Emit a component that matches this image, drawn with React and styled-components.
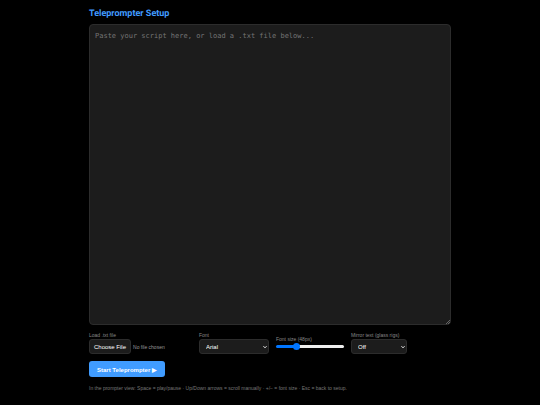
import { useState } from "react";
import styled, { createGlobalStyle } from "styled-components";

const fonts = ["Arial", "Georgia", "Verdana", "Courier New"];

const GlobalStyle = createGlobalStyle`
  * {
    box-sizing: border-box;
  }

  body {
    margin: 0;
    background: #000;
    color: #fff;
    font-family: "Liberation Sans", Arial, sans-serif;
  }
`;

const Setup = styled.main`
  display: flex;
  flex-direction: column;
  align-items: flex-start;
  max-width: 362px;
  height: 100vh;
  margin: 0 auto;
  padding: 8px 0 13px;
`;

const Title = styled.h1`
  margin: 0 0 4px;
  font-family: Roboto, "Liberation Sans", sans-serif;
  font-size: 9px;
  line-height: 12px;
  text-rendering: geometricPrecision;
  color: #409cff;
`;

const Script = styled.textarea`
  display: block;
  flex: 1;
  width: 100%;
  min-height: 80px;
  padding: 5px;
  border: 1px solid #2c2c2c;
  border-radius: 4px;
  background: #1c1c1c;
  color: #fff;
  font-family: "DejaVu Sans Mono", monospace;
  font-size: 7px;
  line-height: 12px;
  resize: vertical;
  outline: none;

  &::placeholder {
    color: #757575;
  }

  &::-webkit-resizer {
    background: linear-gradient(
        135deg,
        transparent 50%,
        #666 50%,
        #666 62%,
        transparent 62%,
        transparent 75%,
        #666 75%,
        #666 87%,
        transparent 87%
      )
      right bottom / 4px 4px no-repeat;
  }
`;

const Controls = styled.div`
  display: flex;
  flex-wrap: wrap;
  align-items: center;
  gap: 7px;
  margin: 7px 0;
`;

const Field = styled.div`
  display: flex;
  flex-direction: column;
  width: ${(props) => props.$width}px;
`;

const Label = styled.label`
  font-size: 5px;
  line-height: 7px;
  color: #888;
`;

const FileInput = styled.input`
  width: 100%;
  height: 15px;
  font-family: inherit;
  font-size: 5px;
  line-height: 15px;
  color: #999;

  &::file-selector-button {
    height: 15px;
    margin: 0 2px 0 0;
    padding: 0 4px;
    border: 1px solid #2c2c2c;
    border-radius: 3px;
    background: #1c1c1c;
    color: #fff;
    font-family: inherit;
    font-size: 6px;
  }
`;

const SelectBox = styled.div`
  position: relative;

  svg {
    position: absolute;
    top: 6px;
    right: 2px;
    width: 4px;
    height: 4px;
    pointer-events: none;
  }
`;

const SelectInput = styled.select`
  display: block;
  appearance: none;
  width: 100%;
  height: 15px;
  padding: 0 6px;
  border: 1px solid #2c2c2c;
  border-radius: 3px;
  background: #1c1c1c;
  color: #fff;
  font-family: inherit;
  font-size: 6px;
`;

const Slider = styled.input`
  display: block;
  appearance: none;
  width: 100%;
  height: 7px;
  margin: 0;
  background: transparent;

  &::-webkit-slider-runnable-track {
    height: 3px;
    border-radius: 2px;
    background: linear-gradient(
      to right,
      #0075ff var(--fill),
      #efefef var(--fill)
    );
  }

  &::-webkit-slider-thumb {
    appearance: none;
    width: 7px;
    height: 7px;
    margin-top: -2px;
    border-radius: 50%;
    background: #0075ff;
  }
`;

const StartButton = styled.button`
  height: 16px;
  padding: 0 8px;
  border: none;
  border-radius: 3px;
  background: #409cff;
  color: #fff;
  font-family: inherit;
  font-size: 6px;
  font-weight: bold;
`;

const Hint = styled.p`
  margin: 8px 0 0;
  font-size: 5px;
  line-height: 7px;
  color: #777;
`;

function Select({ id, value, onChange, options }) {
  return (
    <SelectBox>
      <SelectInput id={id} value={value} onChange={onChange}>
        {options.map((option) => (
          <option key={option}>{option}</option>
        ))}
      </SelectInput>
      <svg viewBox="0 0 8 8" aria-hidden="true">
        <path d="M1 2.5l3 3 3-3" fill="none" stroke="#fff" strokeWidth="2" />
      </svg>
    </SelectBox>
  );
}

function App() {
  const [script, setScript] = useState("");
  const [font, setFont] = useState("Arial");
  const [fontSize, setFontSize] = useState(48);
  const [mirror, setMirror] = useState("Off");

  const loadFile = async (e) => {
    const file = e.target.files[0];
    if (file) {
      setScript(await file.text());
    }
  };

  return (
    <>
      <GlobalStyle />
      <Setup>
        <Title>Teleprompter Setup</Title>
        <Script
          aria-label="Script"
          placeholder="Paste your script here, or load a .txt file below..."
          value={script}
          onChange={(e) => setScript(e.target.value)}
        />
        <Controls>
          <Field $width={103}>
            <Label htmlFor="file">Load .txt file</Label>
            <FileInput id="file" type="file" accept=".txt" onChange={loadFile} />
          </Field>
          <Field $width={70}>
            <Label htmlFor="font">Font</Label>
            <Select
              id="font"
              value={font}
              onChange={(e) => setFont(e.target.value)}
              options={fonts}
            />
          </Field>
          <Field $width={68}>
            <Label htmlFor="size">Font size ({fontSize}px)</Label>
            <Slider
              id="size"
              type="range"
              min="20"
              max="120"
              value={fontSize}
              onChange={(e) => setFontSize(Number(e.target.value))}
              style={{ "--fill": `${fontSize - 20}%` }}
            />
          </Field>
          <Field $width={56}>
            <Label htmlFor="mirror">Mirror text (glass rigs)</Label>
            <Select
              id="mirror"
              value={mirror}
              onChange={(e) => setMirror(e.target.value)}
              options={["Off", "On"]}
            />
          </Field>
        </Controls>
        <StartButton type="button">Start Teleprompter ▶</StartButton>
        <Hint>
          In the prompter view: Space = play/pause · Up/Down arrows = scroll
          manually · +/− = font size · Esc = back to setup.
        </Hint>
      </Setup>
    </>
  );
}

export default App;
